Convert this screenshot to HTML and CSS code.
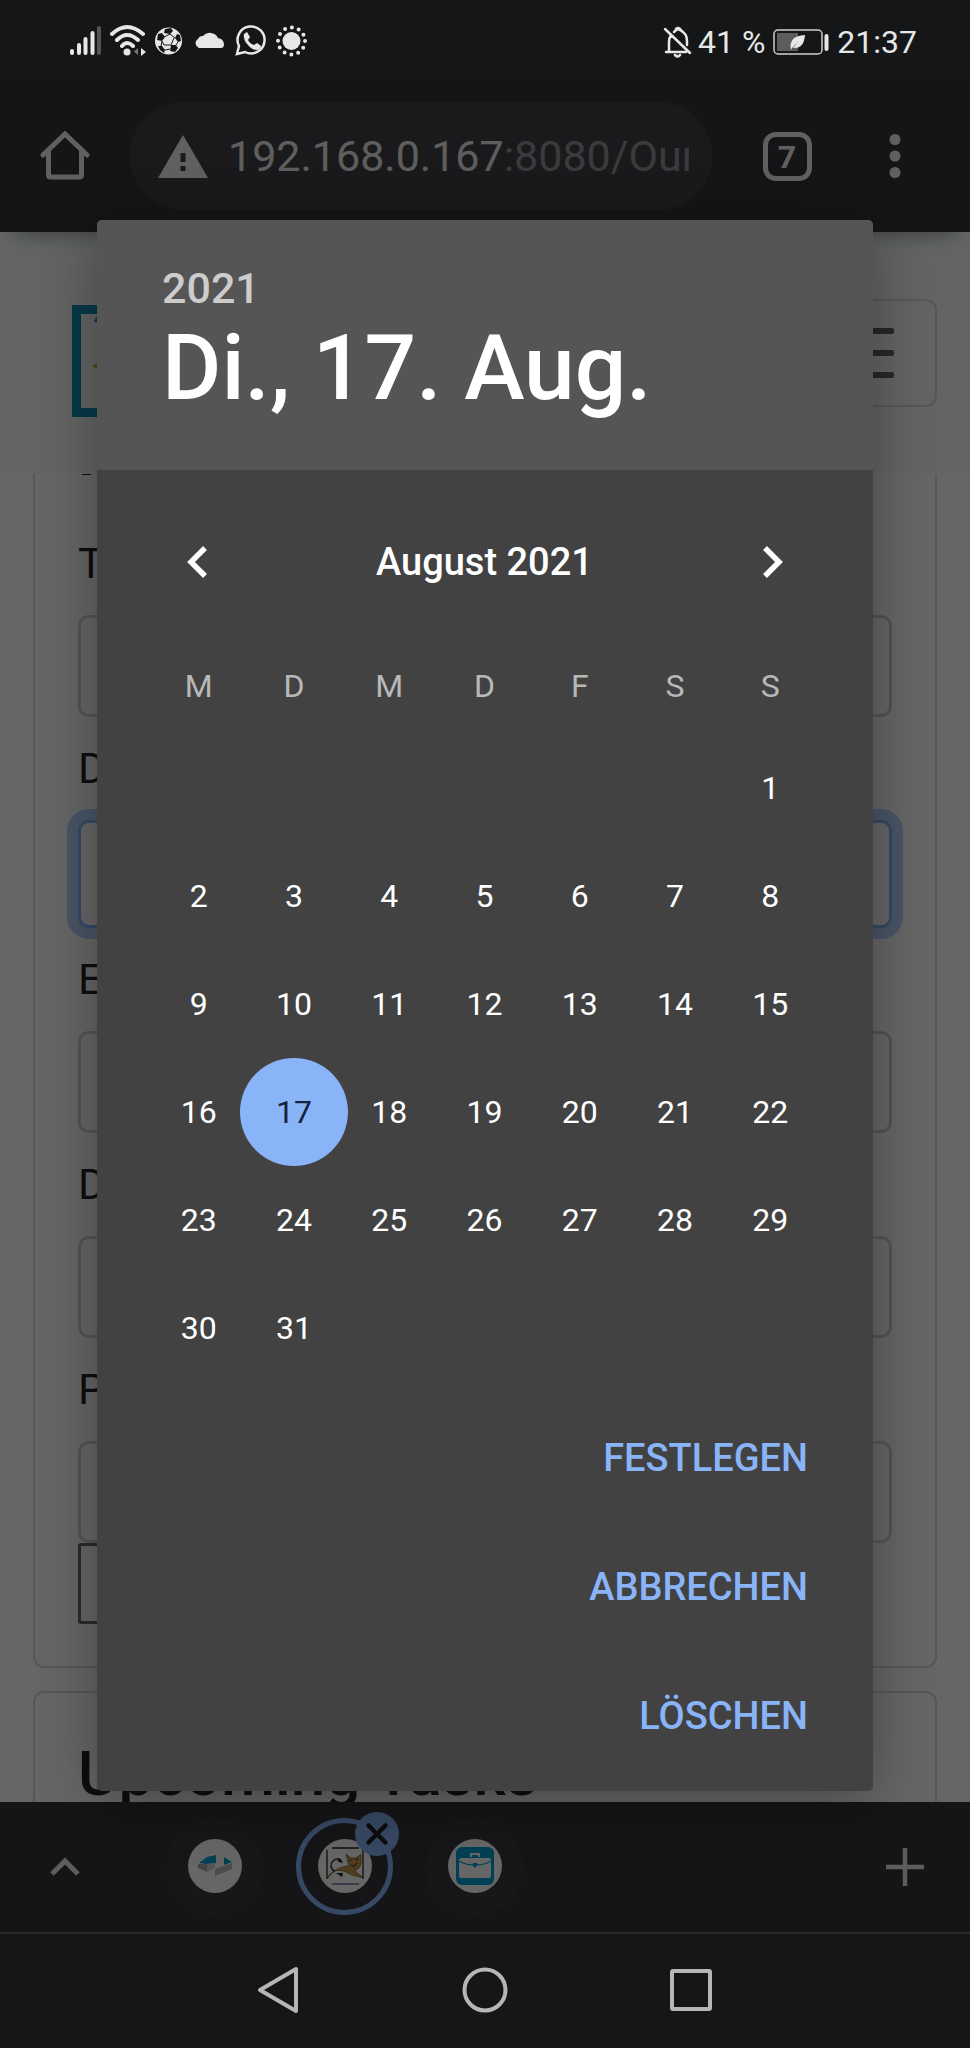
FILE: index.html
```html
<!DOCTYPE html>
<html lang="de">
<head>
<meta charset="utf-8">
<meta name="viewport" content="width=device-width, initial-scale=1">
<title>Datum auswählen</title>
<link rel="stylesheet" href="styles.css">
</head>
<body>
<header class="status">
  <div class="status-icons">
    <svg viewBox="0 0 41 40" aria-label="Signal"><g stroke-width="4" stroke-linecap="round" stroke="#e6e7e7"><path d="M6 31v2M13 25v8M19.500 19v14M26.500 13v20"/><path d="M33 8v25" stroke="#535456"/></g></svg>
    <svg viewBox="0 0 41 40" aria-label="WLAN"><g fill="none" stroke="#e6e7e7" stroke-width="4" stroke-linecap="round"><path d="M5 14Q20 0 36 14M10 20Q20 10 31 20M15 26Q20 20 26 26"/></g><circle cx="20" cy="32" r="3.500" fill="#e6e7e7"/><path d="M31 28v7l-4-3.500z" fill="#77787a"/><path d="M34 28v8l5-4z" fill="#e6e7e7"/></svg>
    <svg viewBox="0 0 41 40" aria-label="Fußball"><circle cx="20.500" cy="21" r="13.500" fill="#e6e7e7"/><path d="M17 9l6-1 2 3-3 3-6-1zM29 14l3 1 1 6-3 1-3-4zM10 14l4-1 3 4-3 4-5-1zM23 25l5 0 2 3-3 4-5-1zM10 26l4 0 3 4-1 3-4-3z" fill="#151618"/><path d="M22 14l5 4M16 17l6-3M14 21l-1 5M17 30l5-1M30 22l-2 3M14 21l2 4 7 0 3-7" fill="none" stroke="#151618" stroke-width="1"/></svg>
    <svg viewBox="0 0 41 40" aria-label="Wolke"><path d="M10 28a5 5 0 0 1-1-9 5 5 0 0 1 5-3 9 9 0 0 1 15 2 7 7 0 0 1 6 6q0 4-3 4z" fill="#e6e7e7"/></svg>
    <svg viewBox="0 0 41 40" aria-label="WhatsApp"><path d="M7 34l2-8a13.500 13.500 0 1 1 6 6z" fill="none" stroke="#e6e7e7" stroke-width="2.500"/><path d="M14 14l3-2 3 5-2 3q2 4 6 5l3-2 4 3q0 3-4 4-5 0-9-5-5-5-4-11z" fill="#e6e7e7"/></svg>
    <svg viewBox="0 0 41 40" aria-label="Sonne"><circle cx="20.500" cy="21" r="9" fill="#e6e7e7"/><circle cx="20.500" cy="21" r="13.500" fill="none" stroke="#e6e7e7" stroke-width="4" stroke-linecap="round" stroke-dasharray="0 7.069"/></svg>
  </div>
  <div class="status-right">
    <svg class="bell" viewBox="0 0 30 32" aria-label="Stumm"><g fill="none" stroke="#e6e7e7" stroke-width="2.500" stroke-linecap="round" stroke-linejoin="round"><path d="M2 3l25 24M3 26h20M6 26V16q0-4 2-7M11 6q2-2 4-3 3 1 5 3 4 3 4 9v4"/><path d="M12 29q3 3 5 0M13 3q2-2 4 0"/></g></svg>
    <span class="percent">41 %</span>
    <svg class="battery" viewBox="0 0 56 28" aria-label="Akku"><rect x="1" y="2" width="48" height="24" rx="4" fill="none" stroke="#cfd0d0" stroke-width="1.500"/><rect x="4" y="5" width="21" height="18" fill="#5b5c5d"/><path d="M18 22q-3-14 14-15-1 14-12 13l6-7-7 7z" fill="#e6e7e7"/><path d="M53.500 8v13" stroke="#e6e7e7" stroke-width="4" stroke-linecap="round"/></svg>
    <time>21:37</time>
  </div>
</header>

<main class="window">
  <div class="toolbar">
    <button class="tool" aria-label="Startseite"><svg width="50" height="50" viewBox="0 0 50 50"><path d="M3 24L25 3l22 21M8.500 20v24q0 2 2 2h29q2 0 2-2V20" fill="none" stroke="#f0f1f2" stroke-width="5" stroke-linecap="round"/></svg></button>
    <button class="address"><svg class="warning" width="50" height="43" viewBox="0 0 50 43"><path d="M25 0l25 43H0z" fill="#f0f1f2"/><path d="M22.500 18h5v9h-5zM22.500 31h5v5h-5z" fill="#414346"/></svg><span class="url">192.168.0.167<span class="path">:8080/Our</span></span></button>
    <button class="tool" aria-label="Tabs"><span class="tab-count">7</span></button>
    <button class="tool" aria-label="Menü"><svg width="12" height="46" viewBox="0 0 12 46" fill="#f0f1f2"><circle cx="6" cy="6.500" r="5.500"/><circle cx="6" cy="23" r="5.500"/><circle cx="6" cy="39.500" r="5.500"/></svg></button>
  </div>

  <div class="page">
    <div class="navbar">
      <svg class="logo" width="112" height="112" viewBox="0 0 112 112"><path d="M4.500 4.500h103v103H4.500z" fill="none" stroke="#158fb4" stroke-width="9"/><path d="M22 17q2-6 6-8v8z" fill="#158fb4"/><path d="M20 61l8-5v10z" fill="#c7b82a"/></svg>
      <button class="toggler" aria-label="Navigation"><span></span><span></span><span></span></button>
    </div>
    <form class="card task-form">
      <i class="title-edge"></i>
      <div class="field"><label for="f1">T</label><input id="f1" type="text"></div>
      <div class="field focused"><label for="f2">D</label><input id="f2" type="text"></div>
      <div class="field"><label for="f3">E</label><input id="f3" type="text"></div>
      <div class="field"><label for="f4">D</label><input id="f4" type="text"></div>
      <div class="field"><label for="f5">P</label><input id="f5" type="text"></div>
      <button class="submit" type="button" aria-label="Senden"></button>
    </form>
    <section class="card upcoming"><h2>Upcoming Tasks</h2></section>
  </div>

  <div class="tabs">
    <button class="tool" aria-label="Mehr"><svg width="32" height="20" viewBox="0 0 32 20"><path d="M3 17L16 4l13 13" fill="none" stroke="#e8e8ea" stroke-width="5"/></svg></button>
    <div class="tab-list">
      <button class="tab" aria-label="Tab 1"><svg width="54" height="54" viewBox="0 0 54 54"><circle cx="27" cy="27" r="27" fill="#fff"/><path d="M11 24l8-6 9-2v8l-9 1z" fill="#0aa0d0"/><path d="M10 25l9 0 0 8-9-4z" fill="#a9a9a9"/><path d="M19 25l8-1v5l-8 4z" fill="#d2d2d2"/><path d="M36 18l8 5-8 3z" fill="#0aa0d0"/><path d="M27 30l17-6v6l-17 7z" fill="#bcbcbc"/></svg></button>
      <button class="tab active" aria-label="Tab 2"><svg width="54" height="54" viewBox="0 0 54 54"><circle cx="27" cy="27" r="27" fill="#fff"/><path d="M9 11v29M45 11v29M14 9h27" stroke="#222" stroke-width="1.300"/><path d="M14 45h27" stroke="#5a5f90" stroke-width="1.300"/><path d="M17 33Q10 27 15 22q4-4 8-1" fill="none" stroke="#333" stroke-width="1.500"/><path d="M19 21q4-2 6 3l-4-1z" fill="#111"/><path d="M18 34l6 4 1-4z" fill="#222"/><path d="M9 40l5-6q8-7 17-7l-3-12 5 4h5l5-4v9q-1 6-6 7l2 3 7 5-12-3-8-4-9-1-5 4z" fill="#c99a45" stroke="#66501c" stroke-width=".7"/><path d="M31 22l2-1M38 21l2-1M33 26q3 3 6-2" fill="none" stroke="#222"/></svg><svg class="close" width="44" height="44" viewBox="0 0 44 44"><circle cx="22" cy="22" r="22" fill="#8ab4f8"/><path d="M13.500 13.500l17 17M30.500 13.500l-17 17" stroke="#202124" stroke-width="4.500" stroke-linecap="round"/></svg></button>
      <button class="tab" aria-label="Tab 3"><svg width="54" height="54" viewBox="0 0 54 54"><circle cx="27" cy="27" r="27" fill="#fff"/><rect x="8" y="8" width="38" height="38" rx="6" fill="#00a0d2"/><path d="M23 18v-3h8v3" fill="none" stroke="#fff" stroke-width="2"/><rect x="11" y="19" width="32" height="20" rx="2" fill="#fff"/><path d="M11 22q7 4 14 4h4q7 0 14-4" fill="none" stroke="#00a0d2" stroke-width="1.300"/><path d="M25 24h4v3l-2 2-2-2z" fill="#00a0d2"/></svg></button>
    </div>
    <button class="tool" aria-label="Neuer Tab"><svg width="40" height="40" viewBox="0 0 40 40"><path d="M20 1v38M1 20h38" stroke="#e8e8ea" stroke-width="4.500"/></svg></button>
  </div>

  <div class="scrim">
    <section class="dialog" role="dialog" aria-label="Datum auswählen">
      <div class="dialog-head">
        <div class="year">2021</div>
        <div class="date">Di., 17. Aug.</div>
      </div>
      <div class="dialog-body">
        <div class="month">
          <button aria-label="Vorheriger Monat"><svg width="24" height="34" viewBox="0 0 24 34"><path d="M20 3L6 17l14 14" fill="none" stroke="#fff" stroke-width="5.500"/></svg></button>
          <span>August 2021</span>
          <button aria-label="Nächster Monat"><svg width="24" height="34" viewBox="0 0 24 34"><path d="M4 3l14 14L4 31" fill="none" stroke="#fff" stroke-width="5.500"/></svg></button>
        </div>
        <table class="days">
          <thead><tr><th>M</th><th>D</th><th>M</th><th>D</th><th>F</th><th>S</th><th>S</th></tr></thead>
          <tbody>
            <tr><td></td><td></td><td></td><td></td><td></td><td></td><td><button>1</button></td></tr>
            <tr><td><button>2</button></td><td><button>3</button></td><td><button>4</button></td><td><button>5</button></td><td><button>6</button></td><td><button>7</button></td><td><button>8</button></td></tr>
            <tr><td><button>9</button></td><td><button>10</button></td><td><button>11</button></td><td><button>12</button></td><td><button>13</button></td><td><button>14</button></td><td><button>15</button></td></tr>
            <tr><td><button>16</button></td><td><button class="selected">17</button></td><td><button>18</button></td><td><button>19</button></td><td><button>20</button></td><td><button>21</button></td><td><button>22</button></td></tr>
            <tr><td><button>23</button></td><td><button>24</button></td><td><button>25</button></td><td><button>26</button></td><td><button>27</button></td><td><button>28</button></td><td><button>29</button></td></tr>
            <tr><td><button>30</button></td><td><button>31</button></td><td></td><td></td><td></td><td></td><td></td></tr>
          </tbody>
        </table>
        <div class="actions">
          <button>FESTLEGEN</button>
          <button>ABBRECHEN</button>
          <button>LÖSCHEN</button>
        </div>
      </div>
    </section>
  </div>
</main>

<nav class="system-nav">
  <button aria-label="Zurück"><svg width="46" height="48" viewBox="0 0 46 48"><path d="M40 3v42L4 24z"/></svg></button>
  <button aria-label="Home"><svg width="46" height="48" viewBox="0 0 46 48"><circle cx="23" cy="24" r="20.500"/></svg></button>
  <button aria-label="Übersicht"><svg width="46" height="48" viewBox="0 0 46 48"><rect x="4" y="5" width="38" height="38" rx="1"/></svg></button>
</nav>
</body>
</html>
```
FILE: styles.css
```css
* { box-sizing: border-box; }

body {
  margin: 0;
  height: 100vh;
  display: flex;
  flex-direction: column;
  overflow: hidden;
  background: #151618;
  font-family: Roboto, "Noto Sans", sans-serif;
}

button {
  margin: 0;
  padding: 0;
  border: 0;
  background: none;
  color: inherit;
  font: inherit;
}

svg { display: block; flex: none; }

/* status bar */
.status {
  flex: none;
  height: 78px;
  padding: 0 53px 0 66px;
  display: flex;
  justify-content: space-between;
  align-items: center;
  color: #e6e7e7;
  font-size: 32px;
}
.status-icons { display: flex; padding-top: 2px; }
.status-icons svg { width: 41px; height: 40px; }
.status-right { display: flex; align-items: center; padding-top: 5px; }
.bell { width: 30px; height: 32px; }
.percent { margin: 0 8px 0 5px; }
.battery { width: 56px; height: 28px; margin-right: 8px; }

/* browser window */
.window {
  position: relative;
  flex: 1;
  min-height: 0;
  display: flex;
  flex-direction: column;
}
.toolbar {
  flex: none;
  display: grid;
  grid-template-columns: 130px 1fr 150px 65px;
  align-items: center;
  height: 154px;
  padding: 2px 43px 0 0;
  background: #35363a;
  position: relative;
  z-index: 1;
  box-shadow: 0 18px 18px -16px rgba(0, 0, 30, .4);
}
.tool { display: flex; align-items: center; justify-content: center; }
.address {
  display: flex;
  align-items: center;
  min-width: 0;
  height: 108px;
  padding: 0 23px 0 28px;
  border-radius: 54px;
  background: #414346;
  color: #eaebed;
  font-size: 43px;
}
.warning { margin-right: 20px; }
.url { flex: 1; overflow: hidden; white-space: nowrap; text-align: left; }
.path { color: #929497; }
.tab-count {
  width: 49px;
  height: 49px;
  border: 5px solid #f0f1f2;
  border-radius: 13px;
  color: #f0f1f2;
  font-size: 32px;
  font-weight: 700;
  line-height: 40px;
}

/* web page */
.page { flex: 1; min-height: 0; overflow: hidden; background: #fff; }
.navbar {
  display: flex;
  align-items: center;
  justify-content: space-between;
  height: 242px;
  padding: 0 33px 0 72px;
  background: #f6fcfa;
}
.logo { margin-top: 16px; }
.toggler {
  display: flex;
  flex-direction: column;
  align-items: center;
  justify-content: center;
  gap: 16px;
  width: 167px;
  height: 108px;
  border: 2px solid #d5dbd9;
  border-radius: 11px;
}
.toggler span { width: 81px; height: 6px; border-radius: 2px; background: #606463; }
.card {
  margin: 0 33px 23px;
  padding: 42px 43px;
  border: 2px solid #d9d9d9;
  border-radius: 11px;
  color: #212529;
}
.task-form { position: relative; padding-top: 57px; border-top: 0; border-radius: 0 0 11px 11px; }
.title-edge { position: absolute; left: 47px; top: 0; width: 9px; height: 1px; background: #212529; }
.field { display: flex; flex-direction: column; margin-bottom: 19px; }
.field:last-of-type { margin-bottom: 0; }
.field label { margin-bottom: 19px; font-size: 43px; line-height: 65px; }
.field input {
  width: 100%;
  height: 102px;
  border: 3px solid #ced4da;
  border-radius: 11px;
  background: #fff;
}
.focused input { height: 108px; border-color: #86b7fe; box-shadow: 0 0 0 11px #b6d4fe; }
.submit { display: block; width: 300px; height: 81px; border: 3px solid #6c6c6c; border-radius: 3px; }
.upcoming { height: 300px; }
.upcoming h2 { margin: 0; font-size: 62px; font-weight: 500; line-height: 78px; }

/* tab strip */
.tabs {
  flex: none;
  display: grid;
  grid-template-columns: 130px 1fr 130px;
  height: 130px;
  background: #35363a;
}
.tab-list { display: flex; align-items: center; gap: 33px; padding: 0 0 2px 36px; }
.tab {
  position: relative;
  display: flex;
  align-items: center;
  justify-content: center;
  width: 97px;
  height: 97px;
  border-radius: 50%;
  background: #3a3b3f;
}
.active { border: 5px solid #8ab4f8; background: none; }
.close { position: absolute; top: -11px; right: -11px; }

/* dialog */
.scrim {
  position: absolute;
  inset: 0;
  z-index: 2;
  display: flex;
  align-items: center;
  justify-content: center;
  background: rgba(0, 0, 0, .6);
}
.dialog {
  width: 80%;
  border-radius: 5px;
  overflow: hidden;
  background: #424242;
  color: #fff;
  box-shadow: 0 10px 60px rgba(0, 0, 0, .32);
}
.dialog-head { padding: 43px 65px 48px; background: #555; font-weight: 500; }
.year { color: #ccc; font-size: 43px; line-height: 51px; }
.date { font-size: 91px; line-height: 108px; }
.dialog-body { padding: 38px 55px 10px 54px; }
.month {
  display: grid;
  grid-template-columns: 91px 1fr 91px;
  height: 108px;
  align-items: center;
  text-align: center;
  font-size: 38px;
  font-weight: 500;
}
.month button { display: flex; justify-content: center; }
.days { width: 100%; table-layout: fixed; border-collapse: collapse; font-size: 32px; text-align: center; }
.days th { height: 118px; padding: 22px 0 0; color: #b8b8b8; font-weight: 400; }
.days td { height: 108px; padding: 0; }
.days button { position: relative; z-index: 0; width: 100%; height: 108px; }
.selected { color: #14233c; }
.selected::before {
  content: "";
  position: absolute;
  z-index: -1;
  left: 50%;
  top: 0;
  width: 108px;
  height: 108px;
  margin-left: -54px;
  border-radius: 50%;
  background: #8ab4f8;
}
.actions { display: flex; flex-direction: column; align-items: flex-end; padding: 12px 10px 0 0; }
.actions button { height: 129px; color: #8ab4f8; font-size: 38px; font-weight: 500; }

/* system navigation */
.system-nav {
  flex: none;
  display: flex;
  justify-content: center;
  height: 116px;
  padding-bottom: 2px;
  border-top: 2px solid #292a2c;
}
.system-nav button { display: flex; align-items: center; justify-content: center; width: 206px; }
.system-nav svg { fill: none; stroke: #b5b6b7; stroke-width: 4; stroke-linejoin: round; }
```
